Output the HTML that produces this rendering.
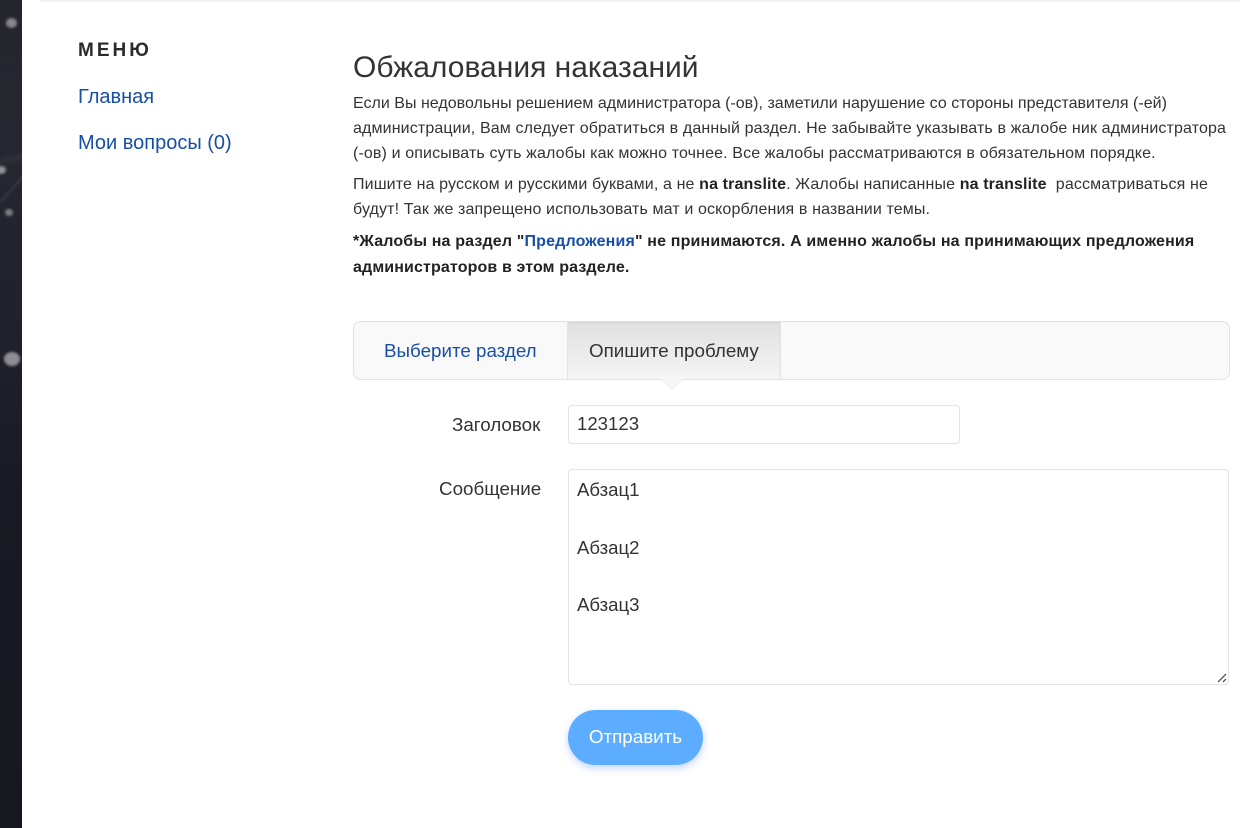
<!DOCTYPE html>
<html lang="ru">
<head>
<meta charset="utf-8">
<title>Обжалования наказаний</title>
<style>
html,body{margin:0;padding:0;background:#fff;width:1250px;height:828px;overflow:hidden}
body{position:relative;font-family:"Liberation Sans",Arial,sans-serif;color:#333}
.a{position:absolute;white-space:nowrap}
a{color:#174ea6;text-decoration:none}
.p{left:353px;font-size:16px;line-height:20px;color:#333}
.f{font-size:18.8px;line-height:22px;color:#333}
b{color:#222}
.dot{position:absolute;border-radius:50%;filter:blur(1.2px)}
</style>
</head>
<body>
<div class="a" style="left:0;top:0;width:22px;height:828px;background:linear-gradient(180deg,#25252e 0,#262630 20%,#21212b 40%,#191923 60%,#171720 100%);overflow:hidden">
  <div style="position:absolute;left:-4px;top:156px;width:32px;height:6px;background:#30303a;transform:rotate(-14deg);filter:blur(2.5px)"></div>
  <div style="position:absolute;left:-6px;top:188px;width:36px;height:2px;background:#3a3a43;transform:rotate(-48deg);filter:blur(1px)"></div>
  <div class="dot" style="left:6px;top:18px;width:11px;height:10px;background:#85858a"></div>
  <div class="dot" style="left:-4px;top:166px;width:10px;height:8px;background:#909095"></div>
  <div class="dot" style="left:5px;top:209px;width:8px;height:7px;background:#7d7d82"></div>
  <div class="dot" style="left:4px;top:352px;width:16px;height:14px;background:#8e8e92"></div>
</div>
<div class="a" style="left:40px;top:0;width:1200px;height:2px;background:#f0f3f6;border-radius:0 0 4px 4px"></div>

<div class="a" style="left:78px;top:40px;font-size:19px;line-height:22px;font-weight:bold;letter-spacing:3px;color:#2b2b2b">МЕНЮ</div>
<a class="a" href="#" style="left:78px;top:86px;font-size:20px;line-height:23px">Главная</a>
<a class="a" href="#" style="left:78px;top:132px;font-size:20px;line-height:23px">Мои вопросы (0)</a>

<div class="a" style="left:353px;top:51px;font-size:30px;line-height:34px;color:#333">Обжалования наказаний</div>
<div class="a p" style="top:94px;letter-spacing:.015px">Если Вы недовольны решением администратора (-ов), заметили нарушение со стороны представителя (-ей)</div>
<div class="a p" style="top:119px;letter-spacing:.13px">администрации, Вам следует обратиться в данный раздел. Не забывайте указывать в жалобе ник администратора</div>
<div class="a p" style="top:144px;letter-spacing:.125px">(-ов) и описывать суть жалобы как можно точнее. Все жалобы рассматриваются в обязательном порядке.</div>
<div class="a p" style="top:175px;letter-spacing:.13px">Пишите на русском и русскими буквами, а не <b>na translite</b>. Жалобы написанные <b>na translite</b>&nbsp; рассматриваться не</div>
<div class="a p" style="top:200px;letter-spacing:.125px">будут! Так же запрещено использовать мат и оскорбления в названии темы.</div>
<div class="a p" style="top:232px;letter-spacing:.155px"><b>*Жалобы на раздел "<a href="#">Предложения</a>" не принимаются. А именно жалобы на принимающих предложения</b></div>
<div class="a p" style="top:258px;letter-spacing:.13px"><b>администраторов в этом разделе.</b></div>

<div class="a" style="left:353px;top:321px;width:875px;height:57px;border:1px solid #e3e3e3;border-radius:8px;background:#f9f9f9;box-shadow:0 0 1px rgba(0,0,0,.06)"></div>
<div class="a" style="left:567px;top:322px;width:214px;height:57px;border-left:1px solid #e3e3e3;border-right:1px solid #e3e3e3;box-sizing:border-box;background:linear-gradient(180deg,#e0e0e0 0,#f5f5f5 100%);box-shadow:inset 0 1px 1px rgba(0,0,0,.08)"></div>
<svg class="a" style="left:660px;top:378px" width="24" height="12" viewBox="0 0 24 12"><path d="M1 1L12 11L23 1Z" fill="#f7f7f7"/><path d="M1 1L12 11L23 1" fill="none" stroke="#ececec"/><path d="M1 0.5H23" stroke="#f5f5f5"/></svg>
<a class="a f" href="#" style="left:384px;top:340px;color:#174ea6">Выберите раздел</a>
<div class="a f" style="left:589px;top:340px">Опишите проблему</div>

<div class="a f" style="left:452px;top:414px">Заголовок</div>
<div class="a" style="left:568px;top:405px;width:390px;height:37px;border:1px solid #e3e3e3;border-radius:4px;background:#fff"></div>
<div class="a f" style="left:577px;top:413px;font-size:18.6px">123123</div>

<div class="a f" style="left:439px;top:478px">Сообщение</div>
<div class="a" style="left:568px;top:469px;width:659px;height:214px;border:1px solid #e3e3e3;border-radius:4px;background:#fff"></div>
<div class="a f" style="left:577px;top:479px;font-size:18.6px">Абзац1</div>
<div class="a f" style="left:577px;top:537px;font-size:18.6px">Абзац2</div>
<div class="a f" style="left:577px;top:594px;font-size:18.6px">Абзац3</div>
<svg class="a" style="left:1216px;top:672px" width="12" height="12" viewBox="0 0 12 12"><path d="M2 10L10 2M7 10L10 7" stroke="#555" stroke-width="1.3" fill="none"/></svg>

<div class="a" style="left:568px;top:710px;width:135px;height:55px;border-radius:27.5px;background:#5cadff;box-shadow:0 3px 8px rgba(80,130,255,.35);color:#fff;font-size:18.8px;line-height:54px;text-align:center">Отправить</div>
</body>
</html>
